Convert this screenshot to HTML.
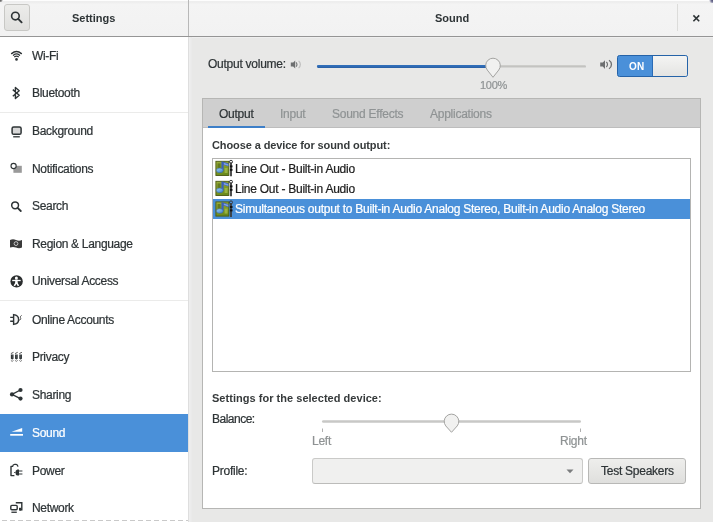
<!DOCTYPE html>
<html><head><meta charset="utf-8">
<style>
*{box-sizing:border-box;margin:0;padding:0}
html,body{-webkit-font-smoothing:antialiased;width:713px;height:522px;overflow:hidden;background:#e8e8e7;font-family:"Liberation Sans",sans-serif;color:#2e3436;font-size:12px;letter-spacing:-0.25px}
.abs{position:absolute;white-space:nowrap}
#hb{position:absolute;left:0;top:0;width:713px;height:37px;background:linear-gradient(#fdfdfd 0,#fdfdfd 1px,#eeeeee 1.5px,#efefef 3px,#f4f4f4 4px,#f2f2f2 36px);border-bottom:1px solid #959595}
.title{font-weight:bold;font-size:11px;top:12px;color:#2e3436;letter-spacing:0}
#srch{left:4px;top:4px;width:26px;height:27px;border:1px solid #c8c8c5;border-radius:3px;background:linear-gradient(#ececea,#e0e0de)}
#sidebar{left:0;top:37px;width:189px;height:485px;background:#fff;border-right:1px solid #dedede}
.sl{position:absolute;left:32px;white-space:nowrap;letter-spacing:-0.32px}
#nb{left:202px;top:98px;width:499px;height:411px;border:1px solid #b6b6b4;background:#fff}
#tabs{left:0;top:0;width:497px;height:29px;background:#cfcfcf;border-bottom:1px solid #bdbdbd}
.tab{position:absolute;top:8px;font-size:12px;color:#8f9394}
.bold{font-weight:bold;font-size:11px;letter-spacing:-0.1px;color:#363a3b}
#list{left:212px;top:158px;width:479px;height:214px;border:1px solid #b4b4b2;background:#fff}
.lt{position:absolute;left:235px;color:#1e1e1e}
#ov{position:absolute;left:0;top:0}
.sl,.lt,.tab,.abs{will-change:transform}
body{-webkit-text-stroke:0.22px currentColor}
.title,.bold,.nostroke{-webkit-text-stroke:0}
</style></head><body>
<div id="hb">
  <div class="abs" id="srch"></div>
  <div class="abs title" style="left:72px">Settings</div>
  <div class="abs" style="left:188px;top:0;width:1px;height:36px;background:#b8b8b8"></div>
  <div class="abs title" style="left:435px">Sound</div>
  <div class="abs" style="left:677px;top:4px;width:1px;height:27px;background:#dcdcda"></div>
</div>

<div class="abs" style="left:0;top:0;width:3px;height:2px;background:radial-gradient(circle at 0 0,#555 0,#888 1.5px,rgba(200,200,200,0) 3px)"></div>
<div class="abs" style="left:709px;top:0;width:4px;height:3px;background:radial-gradient(circle at 100% 0,#4a4a6a 0,#77779a 2px,rgba(200,200,220,0) 4px)"></div>
<div class="abs" style="left:189px;top:37px;width:524px;height:1px;background:#efefef"></div>
<div class="abs" style="left:189px;top:37px;width:3px;height:485px;background:linear-gradient(90deg,#efefef,#e9e9e9)"></div>
<div class="abs" id="sidebar">
  <div class="abs" style="left:0;top:75px;width:188px;height:1px;background:#ebebea"></div>
  <div class="abs" style="left:0;top:263px;width:188px;height:1px;background:#ebebea"></div>
  <div class="abs" style="left:0;top:377px;width:188px;height:38px;background:#4a90d9"></div>
  
</div>
<div class="sl" style="top:49px">Wi-Fi</div>
<div class="sl" style="top:86px">Bluetooth</div>
<div class="sl" style="top:124px">Background</div>
<div class="sl" style="top:162px">Notifications</div>
<div class="sl" style="top:199px">Search</div>
<div class="sl" style="top:237px">Region &amp; Language</div>
<div class="sl" style="top:274px">Universal Access</div>
<div class="sl" style="top:313px">Online Accounts</div>
<div class="sl" style="top:350px">Privacy</div>
<div class="sl" style="top:388px">Sharing</div>
<div class="sl" style="top:426px;color:#fff">Sound</div>
<div class="sl" style="top:464px">Power</div>
<div class="sl" style="top:501px">Network</div>

<div class="abs" style="left:208px;top:57px">Output volume:</div>
<div class="abs" style="left:480px;top:79px;color:#8f9394;font-size:11px">100%</div>
<div class="abs" style="left:617px;top:55px;width:71px;height:22px;border:1px solid #2563a8;border-radius:2.5px;background:#4a90d9;overflow:hidden">
  <div class="abs" style="left:34px;top:0;width:35px;height:20px;background:linear-gradient(#f4f4f3,#e4e4e2);border-left:1px solid #2a6bb5"></div>
  <div class="abs nostroke" style="left:10.5px;top:4.5px;color:#fff;font-weight:bold;font-size:10px;letter-spacing:0.1px">ON</div>
</div>

<div class="abs" id="nb">
  <div class="abs" id="tabs">
    <div class="tab" style="left:16px;color:#2e3436">Output</div>
    <div class="abs" style="left:5px;top:27px;width:57px;height:2px;background:#3d7fc8"></div>
    <div class="tab" style="left:77px">Input</div>
    <div class="tab" style="left:129px">Sound Effects</div>
    <div class="tab" style="left:227px">Applications</div>
  </div>
</div>
<div class="abs bold" style="left:212px;top:139px">Choose a device for sound output:</div>
<div class="abs" id="list">
  <div class="abs" style="left:0;top:40px;width:477px;height:20px;background:#4a90d9"></div>
</div>
<div class="lt" style="top:162px">Line Out - Built-in Audio</div>
<div class="lt" style="top:182px">Line Out - Built-in Audio</div>
<div class="lt" style="top:202px;color:#fff">Simultaneous output to Built-in Audio Analog Stereo, Built-in Audio Analog Stereo</div>

<div class="abs bold" style="left:212px;top:392px;letter-spacing:0.03px">Settings for the selected device:</div>
<div class="abs" style="left:212px;top:412px;letter-spacing:-0.5px">Balance:</div>
<div class="abs" style="left:312px;top:434px;color:#8f9394">Left</div>
<div class="abs" style="left:560px;top:434px;color:#8f9394">Right</div>
<div class="abs" style="left:212px;top:464px">Profile:</div>
<div class="abs" style="left:312px;top:458px;width:271px;height:26px;border:1px solid #cacac8;border-bottom-color:#bcbcba;border-radius:3px;background:#f0f0ef"></div>
<div class="abs" style="left:588px;top:458px;width:98px;height:26px;border:1px solid #b8b8b6;border-radius:3px;background:linear-gradient(#eeeeec,#dfdfdd)"></div>
<div class="abs" style="left:601px;top:464px">Test Speakers</div>

<svg id="ov" width="713" height="522" viewBox="0 0 713 522">
 <g fill="none" stroke="#2e3436">
  <!-- search button -->
  <circle cx="15.4" cy="16.1" r="3.8" stroke-width="1.6"/>
  <line x1="18.2" y1="18.9" x2="21.6" y2="22.3" stroke-width="1.9" stroke-linecap="round"/>
  <!-- close -->
  <path d="M693.4 15.4L699.2 21.2M699.2 15.4L693.4 21.2" stroke-width="1.6"/>
  <!-- wifi -->
  <path d="M11.6 53.6Q16.5 49.4 21.4 53.6" stroke-width="1.4" stroke-linecap="round"/>
  <path d="M13.4 55.2Q16.5 52.6 19.6 55.2" stroke-width="1.3" stroke-linecap="round"/>
  <path d="M14.6 56.8Q16.5 55.6 18.4 56.8" stroke-width="1.2" stroke-linecap="round"/>
  <!-- bluetooth -->
  <path d="M12.8 89.6L19.2 95.2L15.4 98.5L15.4 87.4L19.2 90.8L12.8 96.3" stroke-width="1.4" stroke-linejoin="round"/>
  <!-- background -->
  <rect x="12.1" y="126.9" width="9" height="7.4" rx="1.6" stroke-width="1.5" fill="#d8d8d8"/>
  <line x1="13.2" y1="136.8" x2="19.8" y2="136.8" stroke-width="1.3"/>
  <!-- notifications -->
  <rect x="13.4" y="165.8" width="8.4" height="7" fill="#9a9a9a" stroke="none"/>
  <circle cx="13.6" cy="166" r="2.6" fill="#fff" stroke-width="1.1"/>
  <!-- search -->
  <circle cx="15.1" cy="205.3" r="3.4" stroke-width="1.5"/>
  <line x1="17.6" y1="207.8" x2="20.8" y2="211" stroke-width="1.8" stroke-linecap="round"/>
  <!-- region flag -->
  <path d="M10 240Q13 238.6 16 240Q19 241.4 22 240L22 247.6Q19 249 16 247.6Q13 246.2 10 247.6Z" fill="#3a3a3a" stroke="none"/>
  <circle cx="16" cy="243.6" r="1.9" stroke="#d0d0d0" stroke-width="0.9"/>
  <!-- universal access -->
  <circle cx="16.6" cy="281.4" r="6.2" fill="#2a2d2e" stroke="none"/>
  <circle cx="16.4" cy="278.1" r="1.5" fill="#fff" stroke="none"/>
  <path d="M12.2 280.5L20.7 280.5" stroke="#fff" stroke-width="1.3"/>
  <path d="M16.4 279.6L16.4 283" stroke="#fff" stroke-width="2.4"/>
  <path d="M16.4 282.4L14.3 285.8M16.4 282.4L18.5 285.8" stroke="#fff" stroke-width="1.6"/>
  <!-- online accounts -->
  <path d="M13.6 314.6Q18.6 315 18.6 319.5Q18.6 324 13.6 324.4Z" stroke-width="1.4" fill="#f4f4f4"/>
  <path d="M10.2 317.4L13.6 317.4M10.2 321.2L13.6 321.2" stroke-width="1.4"/>
  <path d="M18.6 319.6Q19.8 320.6 20.6 319.4Q21 318.4 20.4 317.4Q20 316.4 21.6 315.4" stroke="#4a4a4a" stroke-width="1"/>
  <!-- privacy -->
  <g>
   <path d="M10.9 353.6L13.5 352.3" stroke="#555" stroke-width="1"/>
   <path d="M11.5 354.6L11.5 358.4Q12.2 359.2 12.9 358.4L12.9 354.6" stroke="#2e3436" stroke-width="1.3"/>
   <path d="M10.9 360.4L12.1 361.4L13.5 360.4" stroke="#666" stroke-width="0.9"/>
   <path d="M15.1 353.6L17.7 352.3" stroke="#555" stroke-width="1"/>
   <path d="M15.7 354.6L15.7 358.4Q16.4 359.2 17.1 358.4L17.1 354.6" stroke="#2e3436" stroke-width="1.3"/>
   <path d="M15.1 360.4L16.3 361.4L17.7 360.4" stroke="#666" stroke-width="0.9"/>
   <path d="M19.3 353.6L21.9 352.3" stroke="#555" stroke-width="1"/>
   <path d="M19.9 354.6L19.9 358.4Q20.6 359.2 21.3 358.4L21.3 354.6" stroke="#2e3436" stroke-width="1.3"/>
   <path d="M19.3 360.4L20.5 361.4L21.9 360.4" stroke="#666" stroke-width="0.9"/>
  </g>
  <!-- sharing -->
  <path d="M12 394.4L20.4 390M12 394.4L20.4 398.6" stroke-width="1.4"/>
  <g stroke="none" fill="#2e3436"><circle cx="12" cy="394.4" r="2.1"/><circle cx="20.5" cy="390" r="2.1"/><circle cx="20.5" cy="398.6" r="2.1"/></g>
  <!-- sound (white) -->
  <path d="M11.6 431.8L22.2 427.9L22.2 431.8Z" fill="#fff" stroke="none"/>
  <rect x="10.2" y="434" width="12.8" height="1.7" fill="#fff" stroke="none"/>
  <!-- power -->
  <path d="M14.4 475.6L11 475.6L11 466.4L12.6 466.4Q13 464.4 14.6 464.4L16.2 464.4Q17.4 464.4 18 466.6" stroke-width="1.4" stroke-linejoin="round"/>
  <path d="M17.4 469.4Q15.4 469.8 15.4 472.4Q15.4 475 17.4 475.6L19 475.6L19 469.4Z" fill="#2e3436" stroke="none"/>
  <path d="M18.8 471L22.4 471M18.8 474L22.4 474M15.2 472.5L14.2 472.5" stroke-width="1.2"/>
  <!-- network -->
  <path d="M15.8 502.8L21.8 502.8L21.8 509.8L20 509.8" stroke-width="1.4"/>
  <rect x="19" y="507.8" width="2.2" height="2.8" fill="#2e3436" stroke="none"/>
  <rect x="10.8" y="505.4" width="6.4" height="4.4" rx="1" stroke-width="1.4" fill="#fff"/>
  <rect x="11.4" y="511.6" width="5.4" height="1.3" fill="#2e3436" stroke="none"/>
 </g>
 <circle cx="16.5" cy="59.4" r="1.3" fill="#2e3436"/>
 <line x1="2" y1="520.5" x2="188" y2="520.5" stroke="#c9c9c9" stroke-width="1" stroke-dasharray="5 3"/>
 <!-- volume icons -->
 <g fill="#6d6f70">
  <path d="M290.8 62.6L293.2 62.6L295.2 60.6L295.2 68.6L293.2 66.4L290.8 66.4Z"/>
  <path d="M296 62.3A3 3 0 0 1 296 66.7" fill="none" stroke="#6d6f70" stroke-width="1.1"/>
  <path d="M298.6 60.9A4.6 4.6 0 0 1 298.6 68.1" fill="none" stroke="#bdbdbd" stroke-width="1.2"/>
  <path d="M600.2 62.6L602.8 62.6L605 60.2L605 69L602.8 66.6L600.2 66.6Z"/>
  <path d="M606.3 62.1A3 3 0 0 1 606.3 66.9" fill="none" stroke="#6d6f70" stroke-width="1.2"/>
  <path d="M609 60.2A5 5 0 0 1 609 68.8" fill="none" stroke="#6d6f70" stroke-width="1.3"/>
 </g>
 <!-- volume slider -->
 <rect x="317" y="65" width="178" height="3" rx="1.5" fill="#2a62a8"/>
 <rect x="317" y="65.4" width="178" height="1" fill="#3778c6"/>
 <rect x="490" y="65.2" width="96" height="2.4" rx="1.2" fill="#c3c3c1"/>
 <path d="M493 77.3L487.26 70.02A7.3 7.3 0 1 1 498.74 70.02Z" fill="#f1f1f0" stroke="#a3a3a1" stroke-width="1"/>
 <!-- balance slider -->
 <rect x="322" y="420.2" width="259" height="2.6" rx="1.3" fill="#c8c8c6"/>
 <line x1="322.5" y1="428.5" x2="322.5" y2="432" stroke="#b0b0b0" stroke-width="1"/>
 <line x1="580.5" y1="428.5" x2="580.5" y2="432" stroke="#b0b0b0" stroke-width="1"/>
 <path d="M451.5 432.3L445.76 425.92A7.3 7.3 0 1 1 457.24 425.92Z" fill="#f1f1f0" stroke="#a3a3a1" stroke-width="1"/>
 <!-- combo arrow -->
 <path d="M566.5 469.6L573.5 469.6L570 473.2Z" fill="#7b7d7e"/>
 <!-- sound card icons -->
 <defs><linearGradient id="gb" x1="0" y1="0" x2="0.3" y2="1"><stop offset="0" stop-color="#9cb03c"/><stop offset="1" stop-color="#6a8a1c"/></linearGradient>
 <linearGradient id="nh" x1="0" y1="0" x2="1" y2="1"><stop offset="0" stop-color="#9ed2f4"/><stop offset="1" stop-color="#3f7fc8"/></linearGradient></defs>
 <g id="card">
  <rect x="215.9" y="161.3" width="13" height="14.2" fill="url(#gb)" stroke="#4a5a12" stroke-width="0.9"/>
  <rect x="217.6" y="163.4" width="3" height="4.4" fill="#5a701c" opacity="0.8"/>
  <rect x="224.6" y="168" width="3" height="5" fill="#a8c050" opacity="0.7"/>
  <path d="M222.4 161.6L228.6 163.6L228.6 166.6L223.6 164.8L223.6 170.4L221.4 170.4L221.4 161.6Z" fill="#3a60b8"/>
  <path d="M223.8 162.8L228.2 164.2L228.2 165.8L223.8 164.4Z" fill="#7f9fe4"/>
  <ellipse cx="219.8" cy="170.4" rx="3.4" ry="2.3" fill="url(#nh)" stroke="#2c5aa0" stroke-width="0.5"/>
  <path d="M231 162.6L231 176.3" stroke="#3a3a3a" stroke-width="1.8"/>
  <circle cx="231" cy="161.8" r="1.5" fill="none" stroke="#3a3a3a" stroke-width="1"/>
  <rect x="229.9" y="165.4" width="2.6" height="2" fill="#111"/>
  <rect x="229.9" y="168.8" width="2.6" height="2" fill="#111"/>
 </g>
 <use href="#card" y="20"/>
 <use href="#card" y="40.6"/>
</svg>
</body></html>
